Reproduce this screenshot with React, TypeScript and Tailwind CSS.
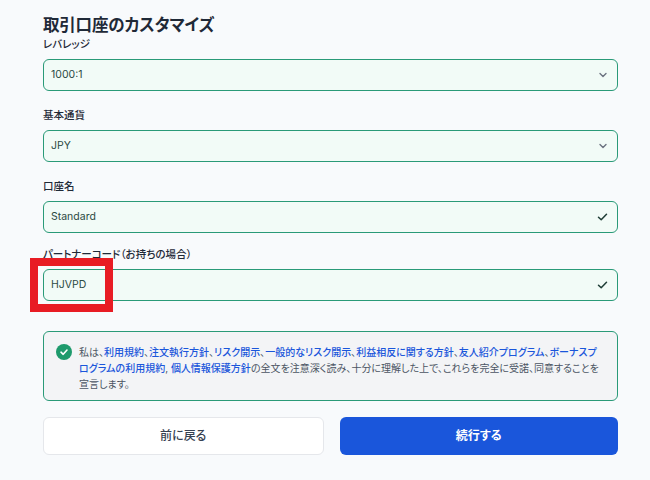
import React from "react";

const Chevron = () => (
  <svg width="10" height="10" viewBox="0 0 10 10" fill="none" className="shrink-0">
    <path d="M2 3.5 L5 6.5 L8 3.5" stroke="#6b7280" strokeWidth="1.4" strokeLinecap="round" strokeLinejoin="round" />
  </svg>
);

const Check = () => (
  <svg width="11" height="10" viewBox="0 0 11 10" fill="none" className="shrink-0">
    <path d="M1.5 5.2 L4.2 7.8 L9.5 2.2" stroke="#1f3d36" strokeWidth="1.5" strokeLinecap="round" strokeLinejoin="round" />
  </svg>
);

function Field({ label, value, icon, mt }: { label: string; value: string; icon: "chev" | "check"; mt: string }) {
  return (
    <div className={`flex flex-col ${mt}`}>
      <div className="text-[10.5px] leading-[16px] text-[#1f2937] font-medium mb-[6px]">{label}</div>
      <div className="h-[32px] rounded-[6px] border border-[#2a9a78] bg-[#f2fbf7] flex items-center justify-between pl-[7px] pr-[9px]">
        <span className="text-[10.5px] text-[#2c4a44]">{value}</span>
        {icon === "chev" ? <Chevron /> : <Check />}
      </div>
    </div>
  );
}

export default function App() {
  const link = "text-[#1a56db] font-medium";
  return (
    <div
      className="relative w-[650px] h-[480px] bg-[#f8fafc] overflow-hidden [font-feature-settings:'palt']"
      style={{ fontFamily: '"Inter", "Noto Sans CJK JP", sans-serif' }}
    >
      <div className="ml-[43px] w-[575px] flex flex-col">
        <h1 className="mt-[13px] text-[16.5px] leading-[24px] font-bold text-[#1f2937] tracking-[-0.2px]">取引口座のカスタマイズ</h1>
        <Field label="レバレッジ" value="1000:1" icon="chev" mt="mt-0" />
        <Field label="基本通貨" value="JPY" icon="chev" mt="mt-[17px]" />
        <Field label="口座名" value="Standard" icon="check" mt="mt-[17px]" />
        <Field label="パートナーコード（お持ちの場合）" value="HJVPD" icon="check" mt="mt-[14px]" />

        <div className="mt-[30px] h-[70px] rounded-[6px] border border-[#2a9a78] bg-[#f3f4f6] flex pl-[12px] pt-[12px]">
          <div className="w-[16px] h-[16px] rounded-full bg-[#1e9a6c] flex items-center justify-center shrink-0">
            <svg width="10" height="10" viewBox="0 0 10 10" fill="none">
              <path d="M2 5.2 L4.2 7.3 L8 3" stroke="#fff" strokeWidth="1.6" strokeLinecap="round" strokeLinejoin="round" />
            </svg>
          </div>
          <p className="ml-[7px] text-[10px] leading-[16px] text-[#4b5563] whitespace-nowrap">
            私は、<span className={link}>利用規約</span>、<span className={link}>注文執行方針</span>、<span className={link}>リスク開示</span>、<span className={link}>一般的なリスク開示</span>、<span className={link}>利益相反に関する方針</span>、<span className={link}>友人紹介プログラム</span>、<span className={link}>ボーナスプ</span>
            <br />
            <span className={link}>ログラムの利用規約</span>, <span className={link}>個人情報保護方針</span>の全文を注意深く読み、十分に理解した上で、これらを完全に受諾、同意することを
            <br />
            宣言します。
          </p>
        </div>

        <div className="mt-[16px] flex gap-[16px]">
          <button className="flex-1 h-[38px] rounded-[6px] border border-[#e5e7eb] bg-white text-[12px] font-medium text-[#374151]">
            前に戻る
          </button>
          <button className="flex-1 h-[38px] rounded-[6px] bg-[#1a56db] text-[12px] font-bold text-white">
            続行する
          </button>
        </div>
      </div>

      <div className="absolute left-[30px] top-[258px] w-[83px] h-[54px] border-[8px] border-[#e81c24]" />
    </div>
  );
}
